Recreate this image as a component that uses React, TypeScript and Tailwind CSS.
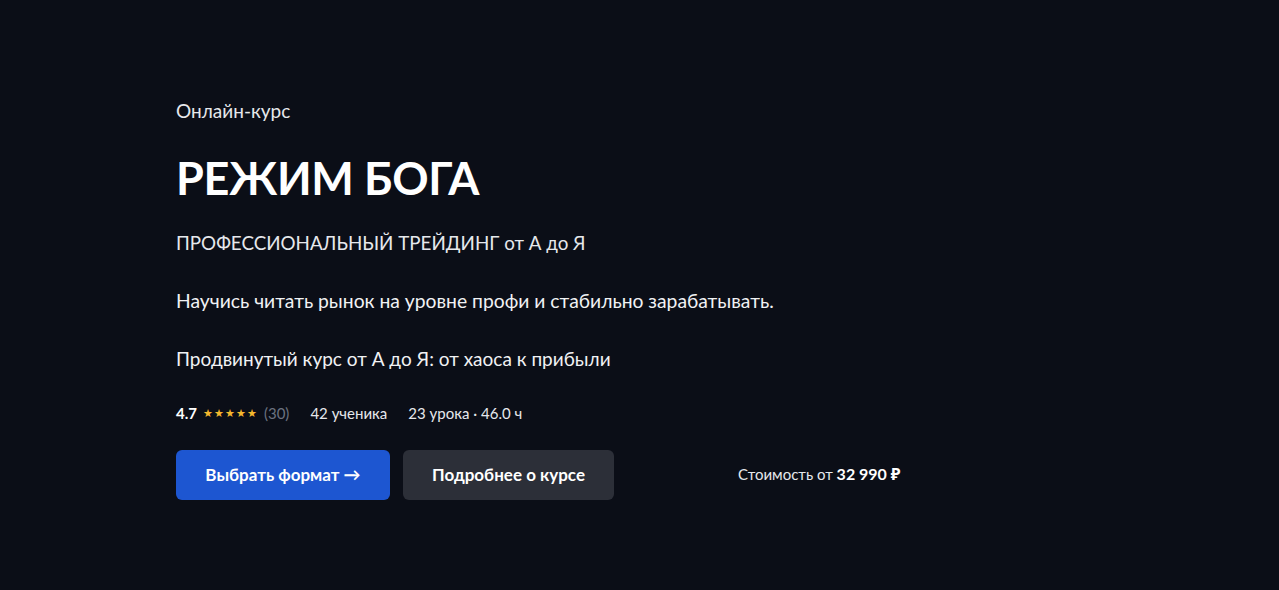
export default function App() {
  return (
    <div
      className="min-h-[590px] w-full bg-[#0b0e17] text-white"
      style={{ fontFamily: "Lato, 'Noto Sans', sans-serif" }}
    >
      <div className="pl-[176px] pt-[98px]">
        {/* Course label */}
        <div className="text-[19px] leading-[26px] text-[#e6e8ec]">Онлайн-курс</div>

        {/* Title */}
        <h1 className="mt-[26px] text-[45px] font-bold leading-[56px] tracking-[-0.3px]">
          РЕЖИМ БОГА
        </h1>

        {/* Subtitle */}
        <div className="mt-[24px] text-[18.8px] leading-[26px] text-[#e6e8ec]">
          ПРОФЕССИОНАЛЬНЫЙ ТРЕЙДИНГ от А до Я
        </div>

        <p className="mt-[32px] text-[19.3px] leading-[26px] text-[#f1f2f4]">
          Научись читать рынок на уровне профи и стабильно зарабатывать.
        </p>

        <p className="mt-[32px] text-[19px] leading-[26px] text-[#f1f2f4]">
          Продвинутый курс от А до Я: от хаоса к прибыли
        </p>

        {/* Stats */}
        <div className="mt-[31px] flex items-center text-[15px] leading-[20px] text-[#e6e8ec]">
          <span className="font-bold text-white">4.7</span>
          <span className="ml-[6px] text-[11px] tracking-[1px] text-[#f5b82e]">★★★★★</span>
          <span className="ml-[6px] text-[#6b7280]">(30)</span>
          <span className="ml-[21px]">42 ученика</span>
          <span className="ml-[21px]">23 урока · 46.0 ч</span>
        </div>

        {/* Actions */}
        <div className="mt-[27px] flex items-center">
          <button className="flex h-[50px] w-[214px] items-center justify-center rounded-[6px] bg-[#1d56d1] text-[17px] font-bold text-white">
            Выбрать формат →
          </button>
          <button className="ml-[13px] flex h-[50px] w-[211px] items-center justify-center rounded-[6px] bg-[#2c2f38] text-[17px] font-bold text-white">
            Подробнее о курсе
          </button>
          <div className="ml-[124px] mb-[2px] text-[15px] text-[#e6e8ec]">
            Стоимость от <span className="text-[16px] font-bold text-white">32 990 ₽</span>
          </div>
        </div>
      </div>
    </div>
  );
}
